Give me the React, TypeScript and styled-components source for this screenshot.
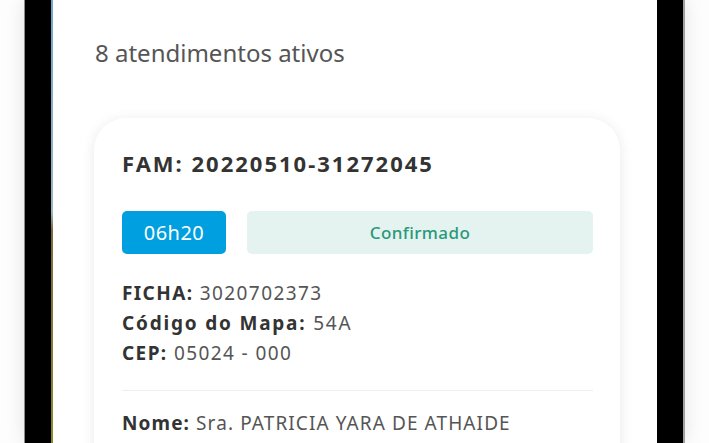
import styled, { createGlobalStyle } from 'styled-components';

const GlobalStyle = createGlobalStyle`
  html, body {
    margin: 0;
    padding: 0;
    background: #ffffff;
    font-family: 'Noto Sans', 'Open Sans', sans-serif;
  }
`;

const Page = styled.div`
  height: 443px;
  overflow: hidden;
  display: flex;
  padding-left: 24px;
  background: #fdfdfd;
`;

const Phone = styled.div`
  width: 661px;
  height: 443px;
  box-sizing: border-box;
  display: flex;
  background: #000;
  border-left: 1px solid #8c8c8c;
  border-right: 2px solid #a0a0a0;
  padding: 0 26px;
  box-shadow: 0 0 18px rgba(0, 0, 0, 0.1);
`;

const Wallpaper = styled.div`
  width: 2px;
  flex-shrink: 0;
  background: linear-gradient(180deg, #6fa6c8 0%, #9bb6bf 48%, #7a6a3a 52%, #8a8a2a 100%);
`;

const Screen = styled.main`
  flex: 1;
  background: #fff;
  padding: 36px 0 0 42px;
  box-sizing: border-box;
  overflow: hidden;
`;

const Title = styled.h2`
  margin: 0 0 48px;
  font-size: 24px;
  font-weight: 400;
  color: #555;
  line-height: 34px;
`;

const Card = styled.section`
  width: 526px;
  min-height: 520px;
  margin-left: -1px;
  border-radius: 32px;
  background: #fff;
  box-shadow: 0 2px 14px rgba(0, 0, 0, 0.09);
  padding: 30px 27px 0 28px;
  box-sizing: border-box;
`;

const Fam = styled.h3`
  margin: 0;
  font-size: 22px;
  font-weight: 700;
  letter-spacing: 2px;
  color: #333;
  line-height: 30px;
`;

const StatusRow = styled.div`
  display: flex;
  gap: 21px;
  margin-top: 33px;
  margin-bottom: 24px;
`;

const TimeBadge = styled.span`
  width: 104px;
  height: 43px;
  border-radius: 5px;
  background: #009fdf;
  color: #fff;
  font-size: 20px;
  letter-spacing: 0.5px;
  display: flex;
  align-items: center;
  justify-content: center;
`;

const StatusPill = styled.span`
  flex: 1;
  height: 43px;
  border-radius: 5px;
  background: #e4f3ef;
  color: #2a987b;
  font-size: 17px;
  font-weight: 500;
  letter-spacing: 0.4px;
  display: flex;
  align-items: center;
  justify-content: center;
`;

const Info = styled.p<{ $spacing?: number }>`
  margin: 0;
  font-size: 19px;
  line-height: 30px;
  letter-spacing: ${(p) => p.$spacing ?? 1.5}px;
  color: #555;

  b {
    color: #333;
    font-weight: 700;
  }
`;

const Divider = styled.hr`
  border: none;
  border-top: 1px solid #eeeeee;
  margin: 22px 0 17px;
`;

export default function App() {
  return (
    <>
      <GlobalStyle />
      <Page>
        <Phone>
          <Wallpaper />
          <Screen>
            <Title>8 atendimentos ativos</Title>
            <Card>
              <Fam>FAM: 20220510-31272045</Fam>
              <StatusRow>
                <TimeBadge>06h20</TimeBadge>
                <StatusPill>Confirmado</StatusPill>
              </StatusRow>
              <Info $spacing={1.4}>
                <b>FICHA:</b> 3020702373
              </Info>
              <Info $spacing={1.8}>
                <b>Código do Mapa:</b> 54A
              </Info>
              <Info $spacing={1.4}>
                <b>CEP:</b> 05024 - 000
              </Info>
              <Divider />
              <Info $spacing={1.1}>
                <b>Nome:</b> Sra. PATRICIA YARA DE ATHAIDE
              </Info>
            </Card>
          </Screen>
        </Phone>
      </Page>
    </>
  );
}
